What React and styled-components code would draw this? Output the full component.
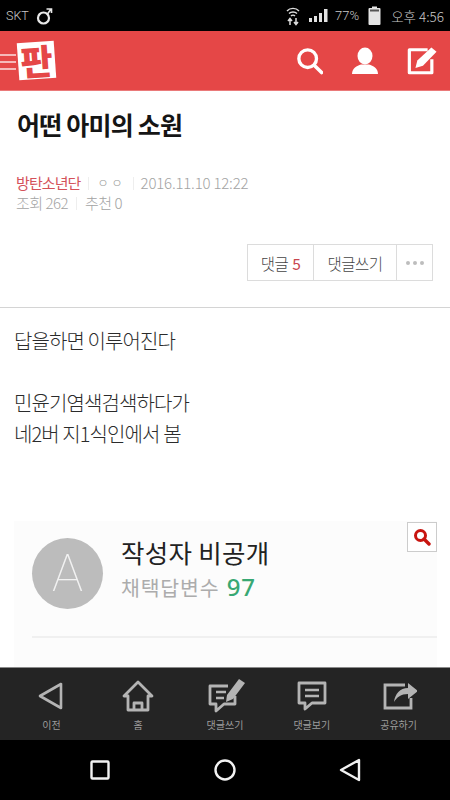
import React from "react";
import styled, { createGlobalStyle } from "styled-components";

const Global = createGlobalStyle`
  html, body { margin: 0; padding: 0; background: #fff; }
  * { box-sizing: border-box; }
  body { font-family: "Noto Sans CJK KR", "Noto Sans", sans-serif; }
`;

const Page = styled.div`
  width: 450px;
  height: 800px;
  display: flex;
  flex-direction: column;
  overflow: hidden;
  background: #fff;
`;

const StatusBar = styled.div`
  height: 31px;
  flex: none;
  background: #000;
  color: #c9c9c9;
  display: flex;
  align-items: center;
  padding: 0 6px;
  font-family: "Roboto", sans-serif;
  font-size: 12.5px;
  font-weight: 300;
`;
const StatusLeft = styled.div`
  display: flex;
  align-items: center;
  gap: 7px;
  flex: 1;
`;
const StatusRight = styled.div`
  display: flex;
  align-items: center;
`;
const Clock = styled.span`
  margin-left: 10px;
  font-family: "Noto Sans CJK KR", sans-serif;
  font-weight: 300;
  font-size: 13.5px;
`;
const Percent = styled.span`
  margin: 0 9px 0 6px;
  font-size: 13px;
`;

const Header = styled.header`
  height: 60px;
  flex: none;
  background: #e54747;
  display: flex;
  align-items: center;
  border-bottom: 1px solid #ea7a7a;
`;
const LogoWrap = styled.div`
  display: flex;
  align-items: center;
  flex: 1;
`;
const Burger = styled.div`
  width: 16px;
  height: 16px;
  margin-top: 2px;
  display: flex;
  flex-direction: column;
  justify-content: space-between;
  span { height: 2px; background: #f6b9b9; display: block; }
`;
const LogoTile = styled.div`
  width: 37px;
  height: 37px;
  margin-left: 2px;
  background: #fff;
  color: #e54747;
  font-size: 35px;
  line-height: 36px;
  font-weight: 900;
  text-align: center;
  transform: rotate(-4deg);
`;
const HeaderIcons = styled.div`
  display: flex;
  align-items: center;
  gap: 28px;
  padding-right: 13px;
`;

const Content = styled.main`
  flex: 1;
  min-height: 0;
  display: flex;
  flex-direction: column;
`;
const Title = styled.h1`
  margin: 13px 0 0 17px;
  font-size: 25px;
  line-height: 40px;
  font-weight: 700;
  color: #151515;
  letter-spacing: -0.8px;
`;
const Meta = styled.div`
  margin: 29px 0 0 16px;
  font-size: 15px;
  line-height: 20px;
  font-weight: 300;
  color: #a3a3a3;
  letter-spacing: -0.5px;
`;
const MetaRow = styled.div`
  display: flex;
  align-items: center;
`;
const Author = styled.span`
  color: #d4525a;
  font-weight: 400;
  letter-spacing: -0.9px;
`;
const Sep = styled.i`
  display: block;
  width: 1px;
  height: 13px;
  background: #eee;
  margin: 0 ${(p) => p.$gap || 8}px;
`;
const Dots = styled.span`
  font-size: 12px;
  letter-spacing: 3px;
  color: #999;
  padding: 0 0 0 2px;
`;
const DateText = styled.span`
  letter-spacing: -0.2px;
`;

const ActionRow = styled.div`
  margin: 31px 17px 0 0;
  align-self: flex-end;
  display: flex;
  height: 37px;
  border: 1px solid #dcdcdc;
`;
const ActionCell = styled.div`
  width: ${(p) => p.$w}px;
  display: flex;
  align-items: center;
  justify-content: center;
  gap: 4px;
  font-size: 15.5px;
  font-weight: 300;
  color: #444;
  letter-spacing: -0.5px;
  border-left: ${(p) => (p.$first ? "none" : "1px solid #dcdcdc")};
  b { font-weight: 400; color: #c8464e; }
`;
const MoreDots = styled.div`
  display: flex;
  gap: 3px;
  span { width: 4px; height: 4px; border-radius: 50%; background: #bdbdbd; }
`;
const Rule = styled.hr`
  margin: 26px 0 0;
  border: 0;
  border-top: 1.5px solid #d4d4d4;
`;
const Body = styled.div`
  margin: 17px 0 0 14px;
  font-size: 20px;
  line-height: 31px;
  font-weight: 300;
  color: #2b2b2b;
  letter-spacing: -0.9px;
  p { margin: 0; min-height: 31px; }
`;

const PictureCard = styled.section`
  position: relative;
  margin: 72px 13px 0 14px;
  flex: 1;
  background: #fcfcfc;
  padding: 17px 0 0 18px;
  overflow: hidden;
`;
const Profile = styled.div`
  display: flex;
  align-items: flex-start;
  gap: 18px;
`;
const ProfileText = styled.div`
  margin-top: -3px;
`;
const Avatar = styled.div`
  width: 71px;
  height: 71px;
  border-radius: 50%;
  background: #bcbcbc;
  color: #f2f2f2;
  display: flex;
  align-items: center;
  justify-content: center;
  font-family: "Roboto", sans-serif;
  font-size: 52px;
  font-weight: 100;
`;
const ProfileName = styled.div`
  font-size: 25.5px;
  line-height: 34px;
  font-weight: 400;
  color: #222;
  letter-spacing: 0.3px;
`;
const ProfileScore = styled.div`
  margin-top: 3px;
  font-size: 20.5px;
  line-height: 30px;
  font-weight: 400;
  color: #acacac;
  letter-spacing: 0.8px;
  b { color: #38a873; font-size: 24px; font-weight: 500; font-family: "Noto Sans", sans-serif; margin-left: 2px; }
`;
const ProfileRule = styled.hr`
  margin: 27px 0 0;
  border: 0;
  border-top: 2px solid #f0f0f0;
`;
const ZoomButton = styled.div`
  position: absolute;
  top: 1px;
  right: 0;
  width: 30px;
  height: 30px;
  background: #fff;
  border: 1px solid #ccc;
  display: flex;
  align-items: center;
  justify-content: center;
`;

const Toolbar = styled.nav`
  height: 73px;
  flex: none;
  background: #242424;
  border-top: 1px solid #8a8a8a;
  padding: 0 8px;
  display: grid;
  grid-template-columns: repeat(5, 1fr);
`;
const ToolItem = styled.div`
  display: flex;
  flex-direction: column;
  align-items: center;
  padding-top: 10px;
`;
const ToolIcon = styled.div`
  height: 36px;
  display: flex;
  align-items: center;
  justify-content: center;
`;
const ToolLabel = styled.span`
  margin-top: 4px;
  font-size: 10px;
  line-height: 14px;
  color: #9c9c9c;
`;

const SystemNav = styled.div`
  height: 60px;
  flex: none;
  background: #000;
  display: flex;
  align-items: center;
  justify-content: center;
`;
const SystemKey = styled.div`
  width: 125px;
  display: flex;
  justify-content: center;
`;

const tool = "#b4b4b4";

const items = [
  {
    label: "이전",
    icon: (
      <svg width="26" height="28" viewBox="0 0 26 28" fill="none" stroke={tool} strokeWidth="2.6" strokeLinejoin="round">
        <path d="M2 14 L23 2 V26 Z" />
      </svg>
    ),
  },
  {
    label: "홈",
    icon: (
      <svg width="34" height="32" viewBox="0 0 34 32" fill="none" stroke={tool} strokeWidth="2.8" strokeLinejoin="round">
        <path d="M17 2 L31 16 H27 V30 H7 V16 H3 Z" />
        <path d="M13 30 V23 H21 V30" />
      </svg>
    ),
  },
  {
    label: "댓글쓰기",
    icon: (
      <svg width="40" height="36" viewBox="-3 0 40 36" fill="none">
        <path d="M20 8 H2 V26 H8 V33 L16 26 H27 V18" stroke={tool} strokeWidth="2.8" strokeLinejoin="round" />
        <path d="M8 14 H18 M8 20 H16" stroke={tool} strokeWidth="2.4" />
        <path d="M31 1 L37 5 L25 21 L18 24 L19 17 Z" fill={tool} />
      </svg>
    ),
  },
  {
    label: "댓글보기",
    icon: (
      <svg width="30" height="30" viewBox="0 0 30 30" fill="none" stroke={tool} strokeWidth="2.8" strokeLinejoin="round">
        <path d="M2 2 H28 V22 H15 L8 28 V22 H2 Z" />
        <path d="M8 9 H22 M8 15 H22" strokeWidth="2.4" />
      </svg>
    ),
  },
  {
    label: "공유하기",
    icon: (
      <svg width="36" height="28" viewBox="-2 0 36 28" fill="none">
        <path d="M22 3 H2 V26 H28 V16" stroke={tool} strokeWidth="2.8" />
        <path d="M25 1 L35 9 L25 17 V12 C18 12 14 15 11 20 C12 12 17 6 25 6 Z" fill={tool} />
      </svg>
    ),
  },
];

export default function App() {
  return (
    <Page>
      <Global />
      <StatusBar>
        <StatusLeft>
          <span>SKT</span>
          <svg width="18" height="19" viewBox="0 0 18 19" fill="none" stroke="#e8e8e8" strokeWidth="2.2">
            <circle cx="7.5" cy="12" r="5.5" />
            <path d="M11.5 8 L15 3 M10.5 3 H15.5 V7" strokeWidth="1.6" />
          </svg>
        </StatusLeft>
        <StatusRight>
          <svg width="14" height="20" viewBox="0 0 14 20" fill="none" stroke="#ddd" strokeWidth="1.4">
            <path d="M1 5 C4 1.5 10 1.5 13 5 M3 7.5 C5 5.5 9 5.5 11 7.5 M5 10 C6 9 8 9 9 10" />
            <path d="M4 19 V13 M2 15 L4 12.5 L6 15 M10 12 V18 M8 16 L10 18.5 L12 16" strokeWidth="1.5" />
          </svg>
          <svg width="20" height="13" viewBox="0 0 20 13" fill="#e2e2e2" style={{ marginLeft: 9 }}>
            <rect x="0" y="9" width="3" height="4" />
            <rect x="5" y="7" width="3" height="6" />
            <rect x="10" y="4" width="3" height="9" />
            <rect x="15" y="0" width="3.5" height="13" />
          </svg>
          <Percent>77%</Percent>
          <svg width="13" height="19" viewBox="0 0 13 19">
            <path d="M4 0.5 H9 V2 H11.5 A1 1 0 0 1 12.5 3 V18 A1 1 0 0 1 11.5 19 H1.5 A1 1 0 0 1 0.5 18 V3 A1 1 0 0 1 1.5 2 H4 Z" fill="#e4e4e4" />
            <rect x="2" y="3.5" width="9" height="2" fill="#555" />
          </svg>
          <Clock>오후 4:56</Clock>
        </StatusRight>
      </StatusBar>

      <Header>
        <LogoWrap>
          <Burger><span /><span /><span /></Burger>
          <LogoTile>판</LogoTile>
        </LogoWrap>
        <HeaderIcons>
          <svg width="26" height="28" viewBox="0 0 28 28" fill="none" stroke="#fff" strokeWidth="3.6">
            <circle cx="11.5" cy="11.5" r="9.5" />
            <path d="M18.5 18.5 L26.5 26.5" strokeWidth="3.8" strokeLinecap="round" />
          </svg>
          <svg width="28" height="28" viewBox="0 0 28 28" fill="#fff">
            <ellipse cx="14" cy="9" rx="7.5" ry="8.5" />
            <path d="M1 27 C1 21 6 19 10 17.5 H18 C22 19 27 21 27 27 Z" />
          </svg>
          <svg width="30" height="30" viewBox="0 0 32 30" fill="none">
            <path d="M22 3 H2.5 V27.5 H26.5 V13" stroke="#fff" strokeWidth="3.4" strokeLinejoin="round" />
            <path d="M26 0.5 L31.5 5 L17 20 L9 22.5 L11 14.5 Z" fill="#fff" />
          </svg>
        </HeaderIcons>
      </Header>

      <Content>
        <Title>어떤 아미의 소원</Title>
        <Meta>
          <MetaRow>
            <Author>방탄소년단</Author>
            <Sep $gap={7} />
            <Dots>ㅇㅇ</Dots>
            <Sep $gap={7} />
            <DateText>2016.11.10 12:22</DateText>
          </MetaRow>
          <MetaRow>
            <span>조회 262</span>
            <Sep />
            <span>추천 0</span>
          </MetaRow>
        </Meta>

        <ActionRow>
          <ActionCell $w={65} $first>
            댓글 <b>5</b>
          </ActionCell>
          <ActionCell $w={83}>댓글쓰기</ActionCell>
          <ActionCell $w={36}>
            <MoreDots><span /><span /><span /></MoreDots>
          </ActionCell>
        </ActionRow>
        <Rule />

        <Body>
          <p>답을하면 이루어진다</p>
          <p />
          <p>민윤기염색검색하다가</p>
          <p>네2버 지1식인에서 봄</p>
        </Body>

        <PictureCard>
          <ZoomButton>
            <svg width="18" height="18" viewBox="0 0 18 18" fill="none" stroke="#c8140f" strokeWidth="3">
              <circle cx="7.5" cy="7.5" r="5" />
              <path d="M11 11 L16 16" strokeWidth="3.4" strokeLinecap="round" />
            </svg>
          </ZoomButton>
          <Profile>
            <Avatar>A</Avatar>
            <ProfileText>
              <ProfileName>작성자 비공개</ProfileName>
              <ProfileScore>
                채택답변수 <b>97</b>
              </ProfileScore>
            </ProfileText>
          </Profile>
          <ProfileRule />
        </PictureCard>
      </Content>

      <Toolbar>
        {items.map((it) => (
          <ToolItem key={it.label}>
            <ToolIcon>{it.icon}</ToolIcon>
            <ToolLabel>{it.label}</ToolLabel>
          </ToolItem>
        ))}
      </Toolbar>

      <SystemNav>
        <SystemKey>
          <svg width="20" height="20" viewBox="0 0 20 20" fill="none" stroke="#f2f2f2" strokeWidth="2.4" strokeLinejoin="round">
            <rect x="1.5" y="1.5" width="17" height="17" rx="1" />
          </svg>
        </SystemKey>
        <SystemKey>
          <svg width="22" height="22" viewBox="0 0 22 22" fill="none" stroke="#f2f2f2" strokeWidth="2.4">
            <circle cx="11" cy="11" r="9.5" />
          </svg>
        </SystemKey>
        <SystemKey>
          <svg width="22" height="24" viewBox="0 0 22 24" fill="none" stroke="#f2f2f2" strokeWidth="2.4" strokeLinejoin="round">
            <path d="M2 12 L20 2 V22 Z" />
          </svg>
        </SystemKey>
      </SystemNav>
    </Page>
  );
}
